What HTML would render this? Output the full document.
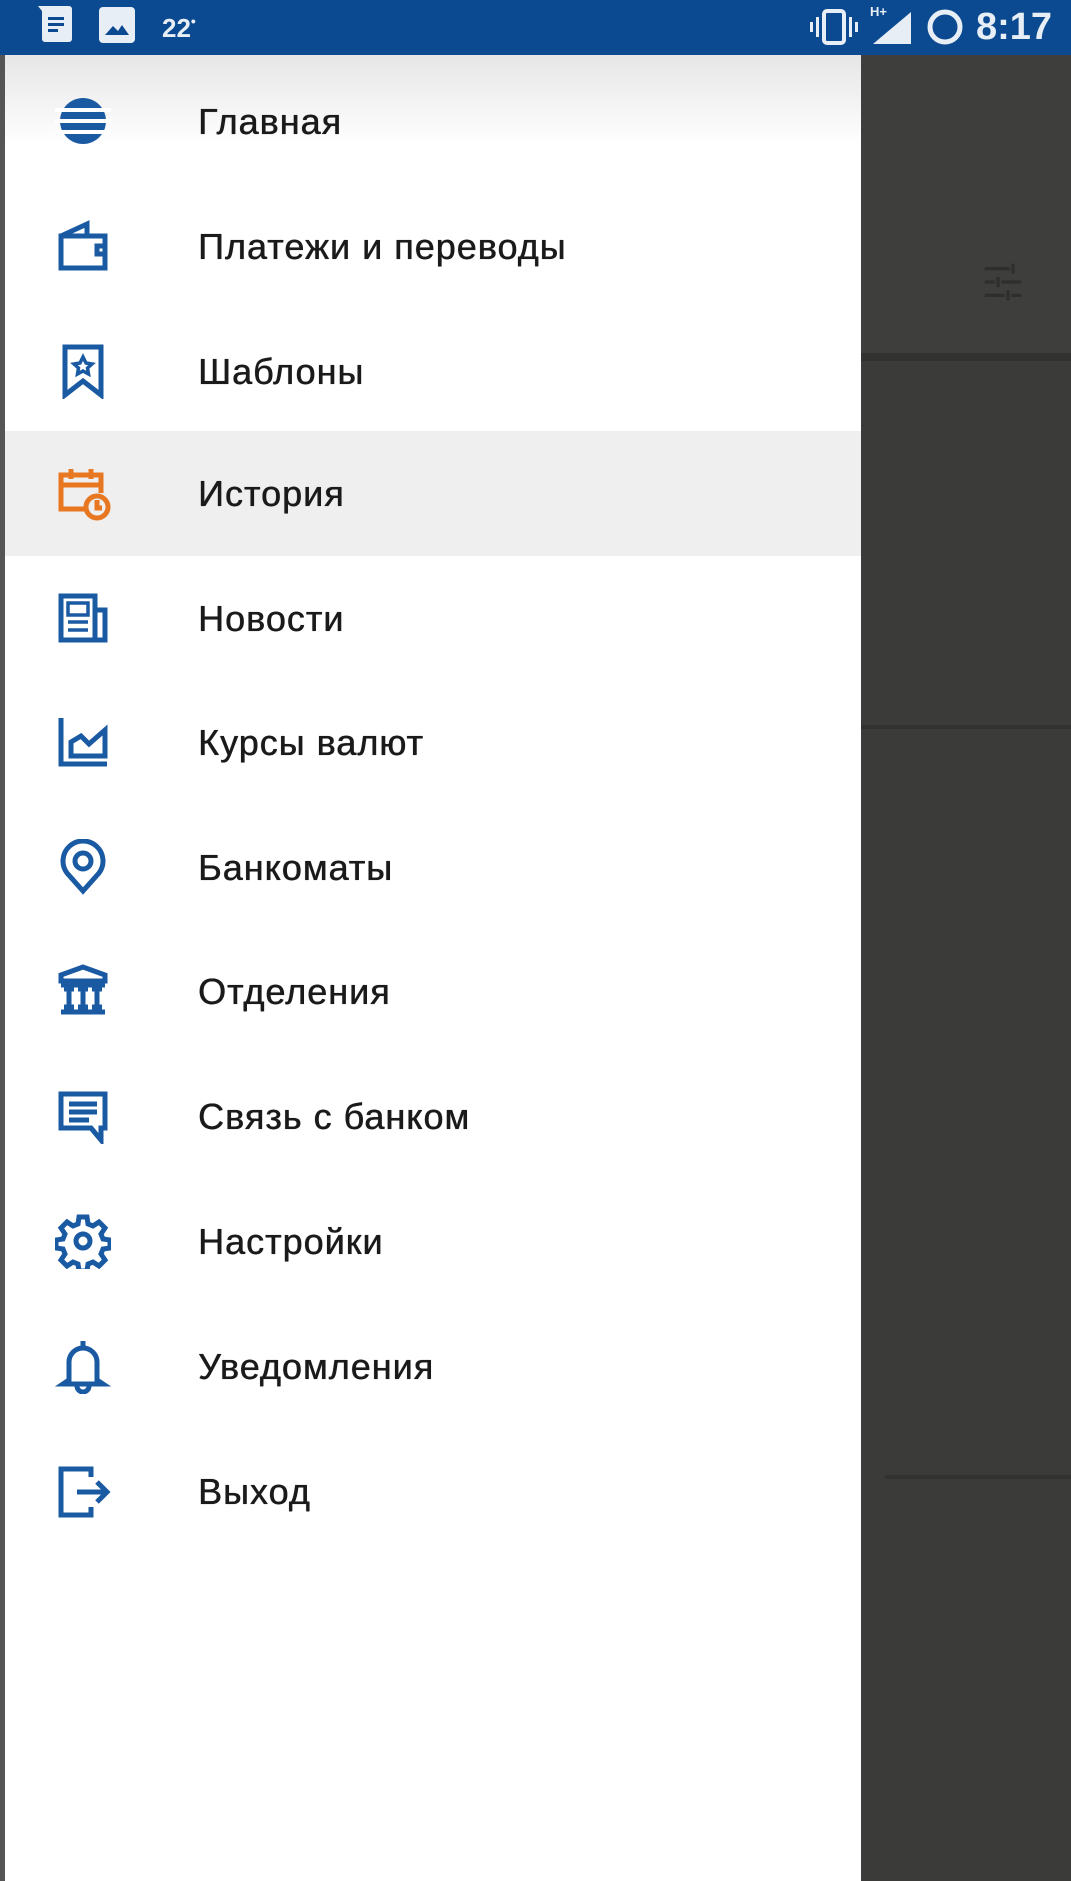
<!DOCTYPE html>
<html><head><meta charset="utf-8"><style>
*{margin:0;padding:0;box-sizing:border-box}
body{width:1071px;height:1881px;overflow:hidden;background:#3b3c3a;font-family:"Liberation Sans",sans-serif;position:relative}
.sb{position:absolute;left:0;top:0;width:1071px;height:55px;background:#0b4a90;color:#e8eef5}
.dark{position:absolute;left:861px;top:55px;width:210px;height:1826px;background:#3b3c3a}
.drawer{position:absolute;left:0;top:55px;width:861px;height:1826px;background:#fff;border-left:5px solid #555}
.shade{position:absolute;left:0;top:0;width:100%;height:90px;background:linear-gradient(#e6e6e6,#fff)}
.item{position:absolute;left:0;width:856px;height:125px}
.item .t{position:absolute;left:193px;top:0;line-height:125px;font-size:36px;letter-spacing:1px;color:#1a1a1a;white-space:nowrap;text-shadow:0 0 0.6px #1a1a1a,0.4px 0 0 #1a1a1a}
.item svg{position:absolute;left:50px;top:34px;width:56px;height:56px}
.hl{background:#efefef}
</style></head><body>
<div class="sb">
 <svg style="position:absolute;left:38px;top:6px" width="36" height="38" viewBox="0 0 36 38"><path d="M3 0h28a3 3 0 0 1 3 3v30a3 3 0 0 1-3 3H7a3 3 0 0 1-3-3V5L0 0z" fill="#e8eef5"/><rect x="10" y="11" width="16" height="3" fill="#0b4a90"/><rect x="10" y="17" width="16" height="3" fill="#0b4a90"/><rect x="10" y="23" width="10" height="3" fill="#0b4a90"/></svg>
 <svg style="position:absolute;left:99px;top:7px" width="36" height="36" viewBox="0 0 36 36"><rect width="36" height="36" rx="4" fill="#e8eef5"/><path d="M6 28l8-9 5 5 4-6 7 10z" fill="#0b4a90"/></svg>
 <div style="position:absolute;left:162px;top:13px;font-size:26px;font-weight:bold">22<span style="font-size:14px;vertical-align:top">&#8226;</span></div>
 <svg style="position:absolute;left:810px;top:8px" width="50" height="38" viewBox="0 0 50 38"><rect x="0" y="14" width="3" height="10" fill="#e8eef5"/><rect x="6" y="9" width="3" height="20" fill="#e8eef5"/><rect x="14" y="3" width="20" height="32" rx="3" fill="none" stroke="#e8eef5" stroke-width="4"/><rect x="39" y="9" width="3" height="20" fill="#e8eef5"/><rect x="45" y="14" width="3" height="10" fill="#e8eef5"/></svg>
 <div style="position:absolute;left:870px;top:4px;font-size:13px;font-weight:bold">H+</div>
 <svg style="position:absolute;left:873px;top:12px" width="38" height="32" viewBox="0 0 38 32"><path d="M38 0V32H0z" fill="#e8eef5"/></svg>
 <svg style="position:absolute;left:926px;top:8px" width="38" height="38" viewBox="0 0 38 38"><circle cx="19" cy="19" r="15" fill="none" stroke="#e8eef5" stroke-width="5"/></svg>
 <div style="position:absolute;left:976px;top:6px;font-size:38px;font-weight:bold">8:17</div>
</div>
<div class="dark">
 <div style="position:absolute;left:0;top:0;width:210px;height:300px;background:#3e3f3d"></div>
 <div style="position:absolute;left:0;top:298px;width:210px;height:8px;background:#323331"></div>
 <div style="position:absolute;left:0;top:670px;width:210px;height:4px;background:#323331"></div>
 <div style="position:absolute;left:24px;top:1420px;width:186px;height:4px;background:#323331"></div>
 <svg style="position:absolute;left:122px;top:205px" width="40" height="44" viewBox="0 0 48 48" stroke="#2e2f2d" stroke-width="4"><path d="M2 8h30M36 2v12M2 24h12M18 18v12M22 24h24M2 40h24M30 34v12M34 40h12"/></svg>
</div>
<div class="drawer">
 <div class="shade"></div>
 <div class="item" style="top:4px"><svg viewBox="0 0 56 56"><circle cx="28" cy="28" r="23" fill="#1a5aa2"/><g fill="#fff"><rect x="0" y="15" width="56" height="4"/><rect x="0" y="26" width="56" height="4"/><rect x="0" y="37" width="56" height="4"/></g></svg><div class="t">Главная</div></div>
 <div class="item" style="top:129px"><svg viewBox="0 0 56 56" fill="none" stroke="#1a5aa2" stroke-width="5"><path d="M6 18h44v32H6zM6 18L32 6v12M42 28h8v8h-8z"/></svg><div class="t">Платежи и переводы</div></div>
 <div class="item" style="top:254px"><svg viewBox="0 0 56 56" fill="none" stroke="#1a5aa2" stroke-width="5"><path d="M10 4h36v48L28 38 10 52z"/><path d="M28 14l3 6 6 1-4.5 4 1 6-5.5-3-5.5 3 1-6L19 21l6-1z" stroke-width="3.5"/></svg><div class="t">Шаблоны</div></div>
 <div class="item hl" style="top:376px"><svg viewBox="0 0 56 56" fill="none" stroke="#e87722" stroke-width="5"><path d="M32 44H6V10h40v18M6 20h40M16 4v10M36 4v10"/><circle cx="42" cy="42" r="11"/><path d="M42 35v8h5"/></svg><div class="t">История</div></div>
 <div class="item" style="top:501px"><svg viewBox="0 0 56 56" fill="none" stroke="#1a5aa2" stroke-width="5"><path d="M6 6h34v44H6zM40 20h10v30H40"/><rect x="13" y="13" width="20" height="12" stroke-width="3.5"/><path d="M13 32h20M13 40h20" stroke-width="3.5"/></svg><div class="t">Новости</div></div>
 <div class="item" style="top:625px"><svg viewBox="0 0 56 56" fill="none" stroke="#1a5aa2" stroke-width="5"><path d="M6 4v46h46"/><path d="M16 42V28l10-6 8 8 16-14v26z"/></svg><div class="t">Курсы валют</div></div>
 <div class="item" style="top:750px"><svg viewBox="0 0 56 56" fill="none" stroke="#1a5aa2" stroke-width="5"><path d="M28 52L12 34a20 20 0 1 1 32 0z"/><circle cx="28" cy="22" r="8"/></svg><div class="t">Банкоматы</div></div>
 <div class="item" style="top:874px"><svg viewBox="0 0 56 56" fill="none" stroke="#1a5aa2" stroke-width="5"><path d="M6 12L28 4l22 8v6H6zM6 22h44M6 49h44M14 26v18M28 26v18M42 26v18M9 26h10M23 26h10M37 26h10M9 44h10M23 44h10M37 44h10" /></svg><div class="t">Отделения</div></div>
 <div class="item" style="top:999px"><svg viewBox="0 0 56 56" fill="none" stroke="#1a5aa2" stroke-width="5"><path d="M6 6h44v34h-4v12L36 40H6z"/><path d="M14 16h28M14 24h28M14 32h20"/></svg><div class="t">Связь с банком</div></div>
 <div class="item" style="top:1124px"><svg viewBox="0 0 56 56" fill="none" stroke="#1a5aa2" stroke-width="5"><path d="M24 4h8l1 7 5 2 6-4 6 6-4 6 2 5 7 1v8l-7 1-2 5 4 6-6 6-6-4-5 2-1 7h-8l-1-7-5-2-6 4-6-6 4-6-2-5-7-1v-8l7-1 2-5-4-6 6-6 6 4 5-2z"/><circle cx="28" cy="28" r="7"/></svg><div class="t">Настройки</div></div>
 <div class="item" style="top:1249px"><svg viewBox="0 0 56 56" fill="none" stroke="#1a5aa2" stroke-width="5"><path d="M28 3v5M14 42V24a14 14 0 0 1 28 0v18l6 4H8z"/><path d="M22 48a6 6 0 0 0 12 0"/></svg><div class="t">Уведомления</div></div>
 <div class="item" style="top:1374px"><svg viewBox="0 0 56 56" fill="none" stroke="#1a5aa2" stroke-width="5"><path d="M36 14V6H6v46h30v-8"/><path d="M22 29h30M42 19l10 10-10 10"/></svg><div class="t">Выход</div></div>
</div>
</body></html>
